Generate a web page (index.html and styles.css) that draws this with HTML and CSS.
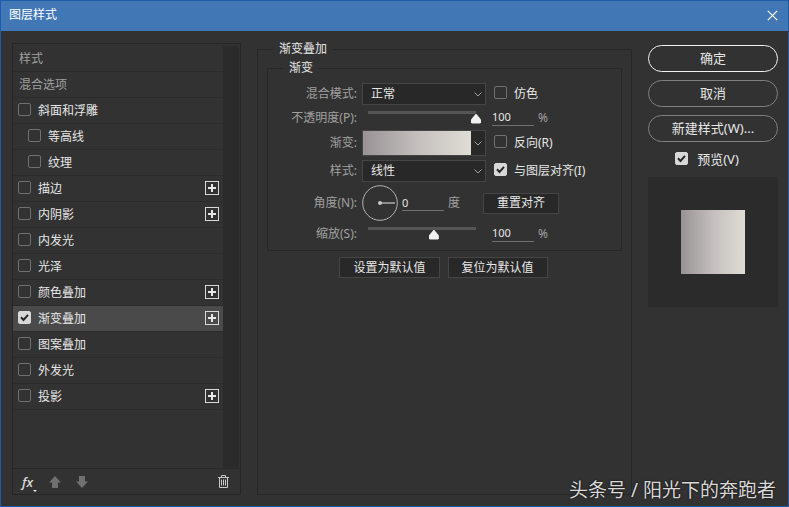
FILE: index.html
```html
<!DOCTYPE html>
<html lang="zh-CN">

<head>
  <meta charset="UTF-8" />
  <meta name="viewport" content="width=device-width, initial-scale=1.0" />
  <title>图层样式</title>
  <link rel="stylesheet" href="styles.css">
</head>

<body>
  <div class="dialog">
    <header class="title-bar">
      <h1>图层样式</h1>
      <button class="close-btn" aria-label="关闭">
        <svg width="11" height="11" viewBox="0 0 11 11"><path d="M.8.8l9.4 9.4M10.2.8L.8 10.2" /></svg>
      </button>
    </header>

    <main class="content">
      <section class="styles-panel">
        <div class="list-area">
          <ul class="style-list">
            <li class="head">样式</li>
            <li class="head">混合选项</li>
            <li><label><input type="checkbox">斜面和浮雕</label></li>
            <li class="sub"><label><input type="checkbox">等高线</label></li>
            <li class="sub"><label><input type="checkbox">纹理</label></li>
            <li><label><input type="checkbox">描边</label><button class="add-btn" aria-label="添加描边"></button></li>
            <li><label><input type="checkbox">内阴影</label><button class="add-btn" aria-label="添加内阴影"></button></li>
            <li><label><input type="checkbox">内发光</label></li>
            <li><label><input type="checkbox">光泽</label></li>
            <li><label><input type="checkbox">颜色叠加</label><button class="add-btn" aria-label="添加颜色叠加"></button></li>
            <li class="selected"><label><input type="checkbox" checked>渐变叠加</label><button class="add-btn" aria-label="添加渐变叠加"></button></li>
            <li><label><input type="checkbox">图案叠加</label></li>
            <li><label><input type="checkbox">外发光</label></li>
            <li><label><input type="checkbox">投影</label><button class="add-btn" aria-label="添加投影"></button></li>
          </ul>
          <div class="scroll-gutter"></div>
        </div>
        <div class="panel-tools">
          <button class="fx-btn">fx</button>
          <button class="tool-btn" aria-label="上移">
            <svg width="12" height="12" viewBox="0 0 12 12"><path d="M6 0l6 6.5H9V12H3V6.5H0z" /></svg>
          </button>
          <button class="tool-btn" aria-label="下移">
            <svg width="12" height="12" viewBox="0 0 12 12"><path d="M6 12l6-6.5H9V0H3v5.5H0z" /></svg>
          </button>
          <button class="trash-btn" aria-label="删除">
            <svg width="11" height="13" viewBox="0 0 11 13"><path d="M0 2.5h11M3.5 2.5v-2h4v2M1.5 2.5v10h8v-10M3.5 4.5v6M5.5 4.5v6M7.5 4.5v6" /></svg>
          </button>
        </div>
      </section>

      <fieldset class="group outer">
        <legend>渐变叠加</legend>
        <fieldset class="group inner">
          <legend>渐变</legend>

          <div class="row">
            <label class="name" for="blend">混合模式:</label>
            <div class="select-box">
              <select id="blend"><option>正常</option></select>
              <svg class="chevron" width="8" height="5" viewBox="0 0 8 5"><path d="M.5.5L4 4 7.5.5" /></svg>
            </div>
            <label class="check"><input type="checkbox">仿色</label>
          </div>

          <div class="row slider-row">
            <label class="name" for="opacity">不透明度(P):</label>
            <input type="range" id="opacity" min="0" max="100" value="100">
            <input type="text" class="num" value="100" aria-label="不透明度">
            <span class="unit">%</span>
          </div>

          <div class="row gradient-row">
            <label class="name" for="gradient">渐变:</label>
            <div class="gradient-box">
              <button class="gradient-swatch" id="gradient"></button>
              <button class="gradient-drop" aria-label="渐变列表">
                <svg class="arrow" width="8" height="5" viewBox="0 0 8 5"><path d="M.5.5L4 4 7.5.5" /></svg>
              </button>
            </div>
            <label class="check"><input type="checkbox">反向(R)</label>
          </div>

          <div class="row">
            <label class="name" for="kind">样式:</label>
            <div class="select-box">
              <select id="kind"><option>线性</option></select>
              <svg class="chevron" width="8" height="5" viewBox="0 0 8 5"><path d="M.5.5L4 4 7.5.5" /></svg>
            </div>
            <label class="check"><input type="checkbox" checked>与图层对齐(I)</label>
          </div>

          <div class="row angle-row">
            <label class="name" for="angle">角度(N):</label>
            <svg class="dial" width="36" height="36" viewBox="0 0 36 36">
              <circle cx="18" cy="18" r="17.3" fill="none" stroke="#b4b4b4" />
              <path d="M18 18h15" stroke="#8c8c8c" stroke-width="2" />
              <circle cx="18" cy="18" r="2" fill="#c8c8c8" />
            </svg>
            <input type="text" class="num" id="angle" value="0">
            <span class="unit">度</span>
            <button class="btn reset-btn">重置对齐</button>
          </div>

          <div class="row slider-row">
            <label class="name" for="scale">缩放(S):</label>
            <input type="range" id="scale" min="0" max="100" value="61">
            <input type="text" class="num" value="100" aria-label="缩放">
            <span class="unit">%</span>
          </div>
        </fieldset>

        <div class="defaults">
          <button class="btn">设置为默认值</button>
          <button class="btn">复位为默认值</button>
        </div>
      </fieldset>

      <aside class="actions">
        <button class="pill primary">确定</button>
        <button class="pill">取消</button>
        <button class="pill">新建样式(W)...</button>
        <label class="check preview-check"><input type="checkbox" checked>预览(V)</label>
        <div class="preview"><div class="preview-swatch"></div></div>
      </aside>
    </main>

    <div class="credit">头条号 / 阳光下的奔跑者</div>
  </div>
</body>

</html>
```

FILE: styles.css
```css
* {
  box-sizing: border-box;
}

body {
  margin: 0;
  background: #323232;
  color: #e6e6e6;
  font: 12px/16px "Noto Sans", "Noto Sans CJK SC", sans-serif;
}

button,
input,
select {
  margin: 0;
  padding: 0;
  border: none;
  background: none;
  color: inherit;
  font: inherit;
}

svg {
  display: block;
  fill: none;
}

.dialog {
  position: relative;
  display: flex;
  flex-direction: column;
  min-height: 100vh;
  border: 1px solid #1f5ba6;
}

/* title bar */
.title-bar {
  display: flex;
  align-items: center;
  justify-content: space-between;
  height: 30px;
  padding: 0 10px 2px 8px;
  background: #4277b6;
  color: #fff;
}

.title-bar h1 {
  margin: 0;
  font-size: 12px;
  font-weight: normal;
}

.close-btn svg {
  stroke: #fff;
  stroke-width: 1.2;
}

.content {
  flex: 1;
  display: grid;
  grid-template-columns: 229px 1fr 130px;
  gap: 16px;
  padding: 10px 10px 11px 11px;
}

/* checkboxes */
input[type="checkbox"] {
  appearance: none;
  flex: none;
  width: 13px;
  height: 13px;
  margin-bottom: 3px;
  border: 1px solid #707070;
  border-radius: 2px;
}

input[type="checkbox"]:checked {
  border-color: #d8d8d8;
  background: #d8d8d8 url("data:image/svg+xml,%3Csvg xmlns='http://www.w3.org/2000/svg' viewBox='0 0 11 11'%3E%3Cpath d='M2 5.3l2.5 2.6L9 2.8' fill='none' stroke='%23282828' stroke-width='2'/%3E%3C/svg%3E") center / 11px 11px no-repeat;
}

/* left panel */
.styles-panel {
  display: flex;
  flex-direction: column;
  margin-top: 2px;
  padding-top: 2px;
  border: 1px solid #262626;
}

.list-area {
  flex: 1;
  display: flex;
  padding-right: 1px;
  border-bottom: 1px solid #292929;
}

.style-list {
  flex: 1;
  margin: 0;
  padding: 0;
  list-style: none;
}

.style-list li {
  display: flex;
  align-items: center;
  justify-content: space-between;
  height: 26px;
  padding: 0 4px 0 5px;
  border-bottom: 1px solid #2b2b2b;
}

.style-list .head {
  padding-left: 6px;
  color: #a0a0a0;
}

.style-list .sub {
  padding-left: 15px;
}

.style-list .selected {
  background: #4a4a4a;
}

.style-list label {
  display: flex;
  align-items: center;
  gap: 7px;
}

.scroll-gutter {
  width: 16px;
  background: #2b2b2b;
}

.add-btn {
  width: 14px;
  height: 14px;
  margin-bottom: 2px;
  border: 1px solid #d8d8d8;
  background:
    linear-gradient(#e6e6e6, #e6e6e6) center / 8px 2px no-repeat,
    linear-gradient(#e6e6e6, #e6e6e6) center / 2px 8px no-repeat;
}

.panel-tools {
  display: flex;
  align-items: center;
  gap: 15px;
  height: 25px;
  padding: 0 11px 0 8px;
}

.fx-btn {
  position: relative;
  width: 13px;
  color: #d8d8d8;
  font: italic 600 13px/16px "Open Sans", sans-serif;
}

.fx-btn::after {
  content: "";
  position: absolute;
  right: -3px;
  bottom: -2px;
  border: 2px solid transparent;
  border-top-color: #e6e6e6;
  border-bottom: none;
}

.tool-btn svg {
  fill: #707070;
}

.trash-btn {
  margin-left: auto;
}

.trash-btn svg {
  stroke: #c8c8c8;
}

/* settings */
.group {
  min-width: 0;
  margin: 0;
  border: 1px solid #272727;
}

.group legend {
  padding: 0 6px;
}

.outer {
  padding: 3px 9px;
}

.outer > legend {
  margin-left: 6px;
}

.inner {
  padding: 7px 0 4px;
}

.inner > legend {
  margin-left: 15px;
}

.row {
  display: flex;
  align-items: center;
  height: 22px;
}

.name {
  flex: none;
  width: 89px;
  margin-right: 5px;
  color: #a0a0a0;
  text-align: right;
}

.check {
  display: flex;
  align-items: center;
  gap: 7px;
}

.row .check {
  margin-left: 8px;
}

.select-box {
  position: relative;
  width: 124px;
}

.select-box select {
  appearance: none;
  width: 100%;
  height: 22px;
  padding-left: 8px;
  border: 1px solid #454545;
  background: #282828;
}

.chevron {
  position: absolute;
  top: 9px;
  right: 4px;
}

.chevron,
.arrow {
  stroke: #a0a0a0;
}

.slider-row {
  height: 25px;
}

input[type="range"] {
  appearance: none;
  width: 118px;
  height: 14px;
  margin: 0 11px 0 1px;
  background: linear-gradient(#555, #555) center top / calc(100% - 10px) 3px no-repeat;
}

input[type="range"]::-webkit-slider-runnable-track {
  height: 14px;
}

input[type="range"]::-webkit-slider-thumb {
  appearance: none;
  width: 10px;
  height: 10px;
  margin-top: 3px;
  background: #f0f0f0;
  clip-path: polygon(50% 0, 100% 60%, 100% 90%, 90% 100%, 10% 100%, 0 90%, 0 60%);
}

.num {
  width: 42px;
  height: 16px;
  border-bottom: 1px solid #707070;
  font-size: 11px;
}

.unit {
  margin-left: 4px;
  color: #a0a0a0;
}

.gradient-row {
  height: 26px;
  margin-bottom: 4px;
}

.gradient-box {
  display: flex;
  width: 124px;
  height: 26px;
  border: 1px solid #454545;
}

.gradient-swatch {
  flex: 1;
}

.gradient-swatch,
.preview-swatch {
  background: linear-gradient(to right, #989295, #c4bfbe 50%, #dfddd6);
}

.gradient-drop {
  width: 14px;
  padding: 0 3px;
  background: #282828;
}

.angle-row {
  height: 36px;
  margin-top: 3px;
}

.dial {
  flex: none;
  margin-right: 4px;
}

.btn {
  height: 21px;
  padding: 0 13px;
  border: 1px solid #454545;
  background: #282828;
}

.reset-btn {
  margin-left: 23px;
}

.defaults {
  display: flex;
  justify-content: center;
  gap: 8px;
  margin: 6px 2px 0 0;
}

/* right column */
.actions {
  display: flex;
  flex-direction: column;
  gap: 8px;
  margin-top: 4px;
  font-size: 13px;
}

.pill {
  height: 27px;
  padding-bottom: 2px;
  border: 1px solid #808080;
  border-radius: 14px;
}

.primary {
  border-color: #f0f0f0;
}

.preview-check {
  justify-content: center;
  gap: 9px;
  height: 19px;
  padding: 0 12px 2px 0;
}

.preview-check input[type="checkbox"] {
  margin-bottom: 0;
}

.preview {
  display: grid;
  place-items: center;
  height: 130px;
  background: #2b2b2b;
}

.preview-swatch {
  width: 64px;
  height: 64px;
}

.credit {
  position: absolute;
  right: 12px;
  bottom: 4px;
  color: #d8d8d8;
  font-size: 19px;
  line-height: 24px;
  text-shadow: 0 0 2px #000;
}
```
